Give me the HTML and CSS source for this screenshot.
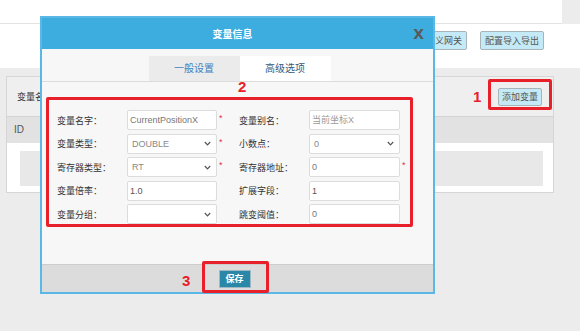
FILE: index.html
```html
<!DOCTYPE html>
<html lang="zh-CN">
<head>
    <meta charset="UTF-8">
    <meta name="viewport" content="width=device-width, initial-scale=1.0">
    <title>变量信息</title>
    <link rel="stylesheet" href="styles.css">
</head>
<body>
    <div class="topbar"></div>
    <div class="toolbar">
        <button class="btn-light">定义网关</button>
        <button class="btn-light">配置导入导出</button>
    </div>

    <div class="content">
        <div class="panel">
            <div class="panel-head">
                <span class="filter-label">变量名</span>
                <button class="btn-light">添加变量</button>
            </div>
            <div class="thead">ID</div>
            <div class="tbody">
                <div class="empty"></div>
            </div>
        </div>
    </div>

    <!-- variable dialog -->
    <div class="modal">
        <div class="modal-head">
            <span class="modal-title">变量信息</span>
            <span class="modal-close">X</span>
        </div>
        <div class="tabs">
            <div class="tab">一般设置</div>
            <div class="tab active">高级选项</div>
        </div>
        <div class="modal-body">
            <div class="form-grid">
                <label>变量名字：</label>
                <div class="field">CurrentPositionX</div>
                <span class="req">*</span>
                <label>变量别名：</label>
                <div class="field hint">当前坐标X</div>
                <span></span>

                <label>变量类型：</label>
                <div class="field select"><span>DOUBLE</span><svg width="7" height="5" viewBox="0 0 7 5"><path d="M0.8 1 L3.5 3.8 L6.2 1" fill="none" stroke="#555" stroke-width="1.2"/></svg></div>
                <span class="req">*</span>
                <label>小数点：</label>
                <div class="field select"><span>0</span><svg width="7" height="5" viewBox="0 0 7 5"><path d="M0.8 1 L3.5 3.8 L6.2 1" fill="none" stroke="#555" stroke-width="1.2"/></svg></div>
                <span></span>

                <label>寄存器类型：</label>
                <div class="field select"><span>RT</span><svg width="7" height="5" viewBox="0 0 7 5"><path d="M0.8 1 L3.5 3.8 L6.2 1" fill="none" stroke="#555" stroke-width="1.2"/></svg></div>
                <span class="req">*</span>
                <label>寄存器地址：</label>
                <div class="field">0</div>
                <span class="req">*</span>

                <label>变量倍率：</label>
                <div class="field dark">1.0</div>
                <span></span>
                <label>扩展字段：</label>
                <div class="field dark">1</div>
                <span></span>

                <label>变量分组：</label>
                <div class="field select"><span></span><svg width="7" height="5" viewBox="0 0 7 5"><path d="M0.8 1 L3.5 3.8 L6.2 1" fill="none" stroke="#555" stroke-width="1.2"/></svg></div>
                <span></span>
                <label>跳变阈值：</label>
                <div class="field">0</div>
                <span></span>
            </div>
        </div>
        <div class="modal-foot">
            <button class="btn-save">保存</button>
        </div>
    </div>

    <!-- red annotation marks -->
    <div class="mark box1"></div>
    <div class="mark-num num1">1</div>
    <div class="mark box2"></div>
    <div class="mark-num num2">2</div>
    <div class="mark box3"></div>
    <div class="mark-num num3">3</div>
</body>
</html>
```

FILE: styles.css
```css
body {
    margin: 0;
    background-color: #ececec;
    font-family: "Liberation Sans", "Noto Sans CJK SC", sans-serif;
    font-size: 9px;
    color: #333;
    position: relative;
    height: 331px;
    overflow: hidden;
}
.topbar {
    height: 23px;
    width: 562px;
    background-color: #fff;
    border-bottom: 1px solid #e3e3e3;
}
.toolbar {
    height: 44px;
    box-sizing: border-box;
    background-color: #fff;
    display: flex;
    justify-content: flex-end;
    align-items: flex-start;
    gap: 13px;
    padding: 7px 36px 0 0;
}
.btn-light {
    height: 19px;
    padding: 0 4px;
    font-family: inherit;
    font-size: 9px;
    color: #555;
    background-color: #c4eaf7;
    border: 1px solid #a9b4b8;
    border-radius: 2px;
}
.content {
    padding: 8px 26px 0 6px;
}
.panel {
    border: 1px solid #d6d6d6;
    background-color: #efefef;
}
.panel-head {
    height: 39px;
    display: flex;
    align-items: center;
    justify-content: space-between;
    padding: 0 11px 0 10px;
}
.panel-head .btn-light {
    height: 18px;
    padding: 0 3px;
}
.filter-label {
    font-size: 9px;
    color: #333;
}
.thead {
    height: 26px;
    line-height: 26px;
    padding-left: 7px;
    background-color: #e2e2e2;
    border-top: 1px solid #d2d2d2;
    color: #555;
    font-size: 10px;
}
.tbody {
    background-color: #fff;
    padding: 8px 10px 6px 13px;
}
.empty {
    height: 35px;
    background-color: #e8e8e8;
}

/* dialog */
.modal {
    position: absolute;
    left: 40px;
    top: 16px;
    width: 391px;
    height: 274px;
    border: 2px solid #5ab8e6;
    background-color: #f7f7f7;
    display: flex;
    flex-direction: column;
}
.modal-head {
    height: 31px;
    flex-shrink: 0;
    background-color: #3dade0;
    display: flex;
    align-items: center;
    padding-right: 9px;
}
.modal-title {
    flex: 1;
    text-align: center;
    padding-left: 10px;
    color: #fff;
    font-weight: bold;
    font-size: 10px;
}
.modal-close {
    color: #5a5a5a;
    font-weight: bold;
    font-size: 14px;
    font-family: "DejaVu Sans", sans-serif;
}
.tabs {
    height: 33px;
    flex-shrink: 0;
    box-sizing: border-box;
    padding: 7px 0 0 4px;
    display: flex;
    justify-content: center;
    border-bottom: 1px solid #dcdcdc;
}
.tab {
    width: 91px;
    height: 25px;
    line-height: 25px;
    text-align: center;
    font-size: 10px;
    color: #3f82c0;
    background-color: #ebebeb;
}
.tab.active {
    background-color: #fff;
    color: #35597c;
}
.modal-body {
    flex: 1;
    padding: 28px 0 0 15px;
}
.form-grid {
    display: grid;
    grid-template-columns: 70px 90px 22px 70px 91px 12px;
    grid-auto-rows: 20px;
    row-gap: 3.5px;
    align-items: center;
}
.form-grid label {
    font-size: 9px;
    color: #333;
}
.field {
    height: 20px;
    box-sizing: border-box;
    border: 1px solid #dcdcdc;
    border-radius: 2px;
    background-color: #fff;
    padding-left: 2px;
    line-height: 18px;
    font-size: 9px;
    color: #777;
    white-space: nowrap;
    overflow: hidden;
}
.field.hint {
    color: #9a9a9a;
}
.field.dark {
    color: #555;
}
.field.select {
    display: flex;
    align-items: center;
    justify-content: space-between;
    padding: 0 5px 0 4px;
    color: #888;
}
.req {
    color: #e2333a;
    font-size: 9px;
    padding-left: 2px;
    align-self: start;
    margin-top: 3px;
}
.modal-foot {
    height: 27px;
    flex-shrink: 0;
    border-top: 1px solid #cdcdcd;
    background-color: #dcdcdc;
    display: flex;
    align-items: center;
    justify-content: center;
}
.btn-save {
    width: 32px;
    height: 18px;
    margin-right: 6px;
    padding: 0;
    font-family: inherit;
    font-size: 9px;
    font-weight: bold;
    color: #fff;
    background-color: #2a87a7;
    border: 1px solid #9fb8c2;
}

/* annotation overlay */
.mark {
    position: absolute;
    box-sizing: border-box;
    border: 3px solid #e8202a;
    border-radius: 2px;
}
.mark-num {
    position: absolute;
    color: #e8202a;
    font-weight: bold;
    font-size: 15px;
    line-height: 15px;
}
.box1 { left: 488px; top: 79px; width: 64px; height: 31px; }
.box2 { left: 46px; top: 97px; width: 367px; height: 130px; }
.box3 { left: 202px; top: 261px; width: 67px; height: 32px; }
.num1 { left: 473px; top: 89px; }
.num2 { left: 238px; top: 79px; }
.num3 { left: 182px; top: 273px; }
```
